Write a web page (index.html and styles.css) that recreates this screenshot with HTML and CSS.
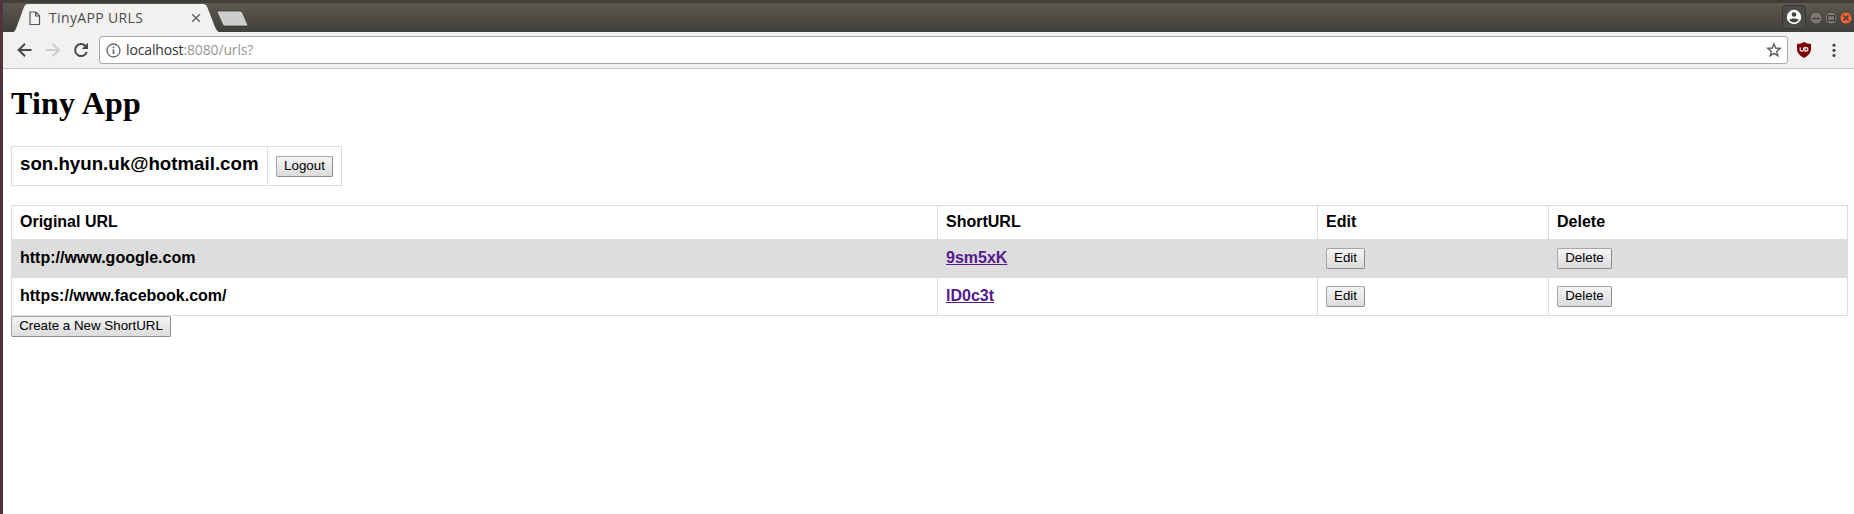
FILE: index.html
```html
<!DOCTYPE html>
<html lang="en">
<head>
<meta charset="utf-8">
<title>TinyAPP URLS</title>
<link rel="stylesheet" href="styles.css">
</head>
<body>
<div class="window">
  <div class="tabbar">
    <div class="tab">
      <svg class="tab-shape" width="216" height="28" viewBox="0 0 216 28"><path d="M0 28.5C3 28 4 25 5 22L12 3Q13.200 0 16 0H191Q194 0 195.200 3L203 23Q205 28 208 28.500Z" fill="#f2f1f0"/></svg>
      <svg class="tab-doc" width="12" height="15" viewBox="0 0 12 15"><path d="M1 1H7L10.500 4.700V13.500H1ZM6.700 1V5H10.500" fill="none" stroke="#555" stroke-width="1.200"/></svg>
      <span class="tab-title">TinyAPP URLS</span>
      <svg class="tab-close" width="10" height="10" viewBox="0 0 10 10"><path d="M1.200 1.200L8.800 8.800M8.800 1.200L1.200 8.800" stroke="#666" stroke-width="1.500"/></svg>
    </div>
    <svg class="new-tab" width="34" height="17" viewBox="0 0 34 17"><path d="M2.500 1H24Q26 1 26.700 3L31.500 14.500Q32 16 30.500 16H9Q7.300 16 6.600 14.300L1.300 2.500Q.8 1 2.500 1Z" fill="#cfcdcc" stroke="#3c3b37" stroke-width=".8"/></svg>
    <div class="profile"><svg width="16" height="16" viewBox="0 0 16 16"><circle cx="8" cy="8" r="7.200" fill="#fff"/><circle cx="8" cy="5.500" r="2.300" fill="#45443f"/><path d="M3.400 10.900C4.500 8.900 11.500 8.900 12.600 10.900C10.500 14.200 5.500 14.200 3.400 10.900Z" fill="#45443f"/></svg></div>
    <svg class="controls" width="44" height="16" viewBox="0 0 44 16">
      <circle cx="7" cy="8" r="6" fill="#7b7971" stroke="#3b3a36" stroke-width=".7"/><path d="M3.500 8.500H11" stroke="#3b3a36" stroke-width="1.200"/>
      <circle cx="22" cy="8" r="6" fill="#7b7971" stroke="#3b3a36" stroke-width=".7"/><rect x="18.600" y="5.600" width="7" height="5" fill="none" stroke="#3b3a36" stroke-width="1.100"/>
      <circle cx="37" cy="8" r="6" fill="#ee6338" stroke="#3b3a36" stroke-width=".7"/><path d="M34.400 5.400L39.600 10.600M39.600 5.400L34.400 10.600" stroke="#413b35" stroke-width="1.400"/>
    </svg>
  </div>
  <div class="toolbar">
    <svg class="nav" width="82" height="20" viewBox="0 0 82 20">
      <path d="M14.500 10H2M8 3.700L1.700 10L8 16.300" fill="none" stroke="#484848" stroke-width="2"/>
      <path d="M29 10H41.500M35.500 3.700L41.800 10L35.500 16.300" fill="none" stroke="#cecdcc" stroke-width="2"/>
      <path d="M68.500 6A6 6 0 1 0 69.800 12" fill="none" stroke="#484848" stroke-width="2"/><path d="M71 2.800V9H64.800Z" fill="#484848"/>
    </svg>
    <div class="omnibox">
      <svg width="15" height="15" viewBox="0 0 15 15"><circle cx="7.500" cy="7.500" r="6.500" fill="none" stroke="#666" stroke-width="1.300"/><path d="M7.500 6.500V11M7.500 3.600V5.300" stroke="#666" stroke-width="1.700"/></svg>
      <span class="address">localhost<span class="path">:8080/urls?</span></span>
      <svg class="star" width="16" height="16" viewBox="0 0 16 16"><path d="M8 1.900L9.700 6L14.200 6.400L10.800 9.300L11.800 13.700L8 11.300L4.200 13.700L5.200 9.300L1.800 6.400L6.300 6Z" fill="none" stroke="#5e5e5e" stroke-width="1.400"/></svg>
    </div>
    <svg class="shield" width="16" height="18" viewBox="0 0 16 18"><path d="M8 1C10 2.300 12.500 3 15 3V8C15 12 12 14.700 8 17C4 14.700 1 12 1 8V3C3.500 3 6 2.300 8 1Z" fill="#800000"/><path d="M4.200 6.500V8.700Q4.200 10.200 5.800 10.200T7.500 8.700V6.500M9 6.700V10.100H10.200Q11.900 10.100 11.900 8.400T10.200 6.700Z" fill="none" stroke="#fff" stroke-width="1.200"/></svg>
    <svg class="menu" width="4" height="15" viewBox="0 0 4 15"><g fill="#4a4a4a"><circle cx="2" cy="2.200" r="1.600"/><circle cx="2" cy="7.300" r="1.600"/><circle cx="2" cy="12.400" r="1.600"/></g></svg>
  </div>
  <main class="page">
    <h1 class="heading">Tiny App</h1>
    <table class="grid account">
      <tr><td class="email">son.hyun.uk@hotmail.com</td><td class="action"><button class="btn logout">Logout</button></td></tr>
    </table>
    <table class="grid urls">
      <colgroup><col class="c-original"><col class="c-short"><col class="c-edit"><col class="c-delete"></colgroup>
      <tr class="head"><th>Original URL</th><th>ShortURL</th><th>Edit</th><th>Delete</th></tr>
      <tr class="row shaded"><td>http://www.google.com</td><td><a class="link" href="#">9sm5xK</a></td><td class="action"><button class="btn edit">Edit</button></td><td class="action"><button class="btn delete">Delete</button></td></tr>
      <tr class="row"><td>https://www.facebook.com/</td><td><a class="link" href="#">lD0c3t</a></td><td class="action"><button class="btn edit">Edit</button></td><td class="action"><button class="btn delete">Delete</button></td></tr>
    </table>
    <button class="btn create">Create a New ShortURL</button>
  </main>
</div>
</body>
</html>
```
FILE: styles.css
```css
* { box-sizing: border-box; }
body { margin: 0; background: #fff; overflow: hidden; }
svg { display: block; flex: none; }
.window { height: 514px; border-left: 3px solid #50363b; background: #fff; }
.tabbar {
  height: 32px;
  display: flex;
  align-items: flex-start;
  border-top: 3px solid #403f3a;
  background: linear-gradient(#5b594f, #403f3a);
}
.tab {
  position: relative;
  width: 208px;
  height: 28px;
  margin: 1px 0 0 9px;
  padding: 0 15px 0 17px;
  display: flex;
  align-items: center;
  font: 14px/18px "Open Sans", "Noto Sans", sans-serif;
  letter-spacing: .35px;
  color: #4b4b4b;
}
.tab-shape { position: absolute; left: 0; top: 0; }
.tab-doc, .tab-title, .tab-close { position: relative; }
.tab-title { margin-left: 8px; white-space: nowrap; flex: 1; }
.tab-close { margin-right: 4px; }
.new-tab { margin: 7px 0 0 -4px; }
.profile {
  width: 24px;
  height: 24px;
  margin: 2px 3px 0 auto;
  display: grid;
  place-items: center;
  border: 1px solid #383733;
  border-radius: 4px;
  background: #4b4a44;
}
.controls { margin: 7px 1px 0 0; }
.toolbar {
  height: 37px;
  display: flex;
  align-items: center;
  background: #f2f1f0;
  border-bottom: 1px solid #cbcac9;
}
.nav { margin-left: 14px; }
.omnibox {
  width: 1689px;
  height: 28px;
  display: flex;
  align-items: center;
  padding: 0 5px 0 6px;
  border: 1px solid #aaa9a8;
  border-radius: 3px;
  background: #fff;
}
.address {
  flex: 1;
  margin-left: 5px;
  font: 14px/18px "Open Sans", "Noto Sans", sans-serif;
  letter-spacing: -.14px;
  color: #333;
}
.path { color: #969696; }
.shield { margin-left: 8px; }
.menu { margin-left: 20px; }
.page { padding: 0 6px 0 8px; }
.heading {
  margin: 0;
  padding-top: 16px;
  height: 77px;
  font: bold 32px/37px "Liberation Serif", "Times New Roman", serif;
  letter-spacing: .2px;
  color: #000;
}
.grid {
  border-collapse: separate;
  border-spacing: 0;
  table-layout: fixed;
  border: solid #ddd;
  border-width: 1px 0 0 1px;
  font: bold 16px/18px "Liberation Sans", Arial, sans-serif;
  color: #000;
}
.grid th, .grid td {
  padding: 8px 8px 0;
  text-align: left;
  vertical-align: top;
  border: solid #ddd;
  border-width: 0 1px 1px 0;
}
.grid th { padding-top: 7px; }
.account { width: 331px; height: 40px; margin-bottom: 19px; }
.account .email { width: 256px; padding-top: 6px; font-size: 18.72px; line-height: 22px; }
.account .action { padding-top: 9px; }
.urls { width: 1837px; }
.urls td { padding-top: 9px; }
.urls .action { padding-top: 8px; }
.c-original { width: 926px; }
.c-short { width: 380px; }
.c-edit { width: 231px; }
.head { height: 34px; }
.row { height: 38px; }
.shaded { background: #ddd; }
.link { color: #551a8b; text-decoration: underline; }
.btn {
  display: block;
  height: 21px;
  padding: 0 0 1px;
  border: 1px solid #a6a6a6;
  border-bottom-color: #8d8d8d;
  border-right-color: #8d8d8d;
  border-radius: 2px;
  background: linear-gradient(#f5f5f5, #dcdcdc);
  font: 13.333px/18px "Liberation Sans", Arial, sans-serif;
  color: #000;
}
.logout { width: 57px; }
.edit { width: 39px; }
.delete { width: 55px; }
.create { width: 160px; }
```
